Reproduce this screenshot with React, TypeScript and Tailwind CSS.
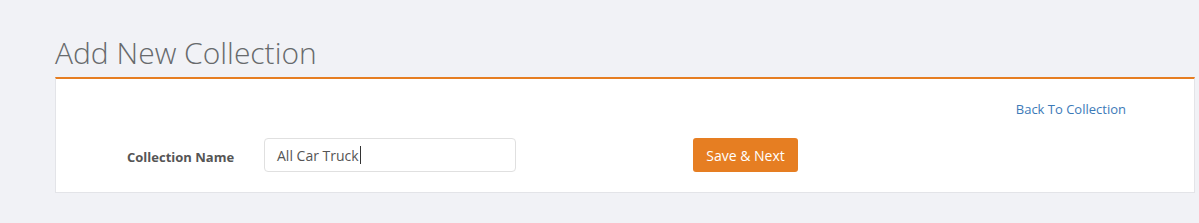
export default function App() {
  return (
    <div className="min-h-[223px] bg-[#f1f2f6] pt-[34px] pl-[55px] pr-[4px] font-['Open_Sans',sans-serif]">
      <h1 className="text-[30px] font-light leading-[38px] text-[#676a6c] pb-[5px]">Add New Collection</h1>

      <div className="bg-white border border-[#e3e4e8] border-t-2 border-t-[#e67e22] h-[116px] pl-[70px] pr-[68px]">
        <div className="flex justify-end pt-[21px]">
          <a href="#" className="text-[13px] text-[#3c7ab8] leading-[18px]">
            Back To Collection
          </a>
        </div>

        <div className="flex items-center mt-[20px]">
          <label className="w-[138px] pl-[1px] text-[13px] font-bold text-[#555] pt-[6px]">Collection Name</label>
          <div className="w-[252px] h-[34px] border border-[#e0e0e0] rounded-[4px] flex items-center pl-[12px] text-[14px] text-[#555]">
            All Car Truck
            <span className="inline-block w-px h-[18px] bg-[#333] ml-[1px]" />
          </div>
          <button className="ml-[177px] w-[105px] h-[34px] bg-[#e67e22] rounded-[3px] text-white text-[14px]">
            Save &amp; Next
          </button>
        </div>
      </div>
    </div>
  );
}
